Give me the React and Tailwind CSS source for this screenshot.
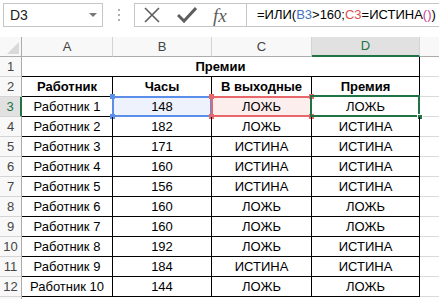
import React from "react";

const F = { fontFamily: '"Liberation Sans", Arial, sans-serif' };

const rows = [
  ["Работник 1", "148", "ЛОЖЬ", "ЛОЖЬ"],
  ["Работник 2", "182", "ЛОЖЬ", "ИСТИНА"],
  ["Работник 3", "171", "ИСТИНА", "ИСТИНА"],
  ["Работник 4", "160", "ИСТИНА", "ИСТИНА"],
  ["Работник 5", "156", "ИСТИНА", "ИСТИНА"],
  ["Работник 6", "160", "ЛОЖЬ", "ЛОЖЬ"],
  ["Работник 7", "160", "ЛОЖЬ", "ЛОЖЬ"],
  ["Работник 8", "192", "ЛОЖЬ", "ИСТИНА"],
  ["Работник 9", "184", "ИСТИНА", "ИСТИНА"],
  ["Работник 10", "144", "ЛОЖЬ", "ЛОЖЬ"],
];

function RowHdr({ n, sel }) {
  return (
    <div
      className={
        "w-[22px] shrink-0 h-full flex items-center justify-center text-[13px] border-b border-b-[#d4d4d4] " +
        (sel
          ? "bg-[#e1e1e1] text-[#217346] border-r-2 border-r-[#217346]"
          : "bg-[#f8f8f8] text-[#444] border-r border-r-[#ababab]")
      }
    >
      {n}
    </div>
  );
}

function Cell({ w, children, bold, extra = "" }) {
  return (
    <div
      className={
        w +
        " shrink-0 h-full flex items-center justify-center border-r border-b border-black text-[13px] text-black relative " +
        (bold ? "font-bold " : "") +
        extra
      }
    >
      {children}
    </div>
  );
}

function Blank() {
  return <div className="flex-1 h-full border-b border-[#dadada]" />;
}

export default function App() {
  return (
    <div className="w-[439px] h-[299px] bg-white overflow-hidden relative" style={F}>
      {/* Top bar */}
      <div className="flex items-start pt-[3px] h-[37px]">
        <div className="ml-[3px] w-[100px] h-[24px] border border-[#c6c6c6] flex items-center justify-between pl-[6px] pr-[5px] text-[14px] text-[#222]">
          <span>D3</span>
          <svg width="8" height="5" viewBox="0 0 8 5">
            <path d="M0 0 H8 L4 4 Z" fill="#777" />
          </svg>
        </div>
        <div className="w-[31px] h-[24px] flex flex-col items-center justify-center gap-[3px]">
          <div className="w-[2px] h-[2px] bg-[#b0b0b0]" />
          <div className="w-[2px] h-[2px] bg-[#b0b0b0]" />
          <div className="w-[2px] h-[2px] bg-[#b0b0b0]" />
        </div>
        <div className="flex-1 h-[24px] border border-[#c6c6c6] border-r-0 flex items-center">
          <div className="w-[112px] h-full flex items-center border-r border-[#c6c6c6] pl-[8px] gap-[16px]">
            <svg width="18" height="16" viewBox="0 0 18 16">
              <path d="M2 1 L16 15 M16 1 L2 15" stroke="#5e5e5e" strokeWidth="1.6" fill="none" />
            </svg>
            <svg width="20" height="16" viewBox="0 0 20 16">
              <path d="M1 8 L7 14 L19 1" stroke="#5e5e5e" strokeWidth="3" fill="none" />
            </svg>
            <span
              className="text-[19px] italic text-[#5e5e5e] leading-none"
              style={{ fontFamily: '"Liberation Serif", "Times New Roman", serif' }}
            >
              fx
            </span>
          </div>
          <div className="pl-[10px] text-[13px] text-black whitespace-nowrap">
            =ИЛИ(<span className="text-[#4472c4]">B3</span>&gt;160;
            <span className="text-[#e0504f]">C3</span>=ИСТИНА
            <span className="text-[#d04090]">()</span>)
          </div>
        </div>
      </div>

      {/* Column headers */}
      <div className="flex h-[20px] text-[13px] text-[#444]">
        <div className="w-[22px] shrink-0 h-full bg-[#f8f8f8] border-r border-b border-[#ababab] relative">
          <svg className="absolute right-[2px] bottom-[2px]" width="12" height="12" viewBox="0 0 12 12">
            <path d="M12 0 V12 H0 Z" fill="#d9d9d9" />
          </svg>
        </div>
        <div className="w-[91px] shrink-0 h-full bg-[#f8f8f8] border-r border-r-[#d4d4d4] border-b border-b-[#ababab] flex items-center justify-center">A</div>
        <div className="w-[99px] shrink-0 h-full bg-[#f8f8f8] border-r border-r-[#d4d4d4] border-b border-b-[#ababab] flex items-center justify-center">B</div>
        <div className="w-[100px] shrink-0 h-full bg-[#f8f8f8] border-r border-r-[#d4d4d4] border-b border-b-[#ababab] flex items-center justify-center">C</div>
        <div className="w-[108px] shrink-0 h-full bg-[#e1e1e1] border-r border-r-[#d4d4d4] border-b-2 border-b-[#217346] text-[#217346] flex items-center justify-center">D</div>
        <div className="flex-1 h-full bg-[#f8f8f8] border-b border-b-[#ababab]" />
      </div>

      {/* Row 1 */}
      <div className="flex h-[20px]">
        <RowHdr n={1} />
        <Cell w="w-[398px]" bold>Премии</Cell>
        <Blank />
      </div>

      {/* Row 2 */}
      <div className="flex h-[20px]">
        <RowHdr n={2} />
        <Cell w="w-[91px]" bold>Работник</Cell>
        <Cell w="w-[99px]" bold>Часы</Cell>
        <Cell w="w-[100px]" bold>В выходные</Cell>
        <Cell w="w-[108px]" bold>Премия</Cell>
        <Blank />
      </div>

      {rows.map((r, i) => {
        const n = i + 3;
        const first = i === 0;
        return (
          <div key={n} className="flex h-[20px]">
            <RowHdr n={n} sel={first} />
            <Cell w="w-[91px]">{r[0]}</Cell>
            <Cell w="w-[99px]" extra={first ? "bg-[#eef2fc]" : ""}>
              {first && (
                <>
                  <div className="absolute left-[-1px] top-[-1px] right-[-1px] bottom-[-1px] border-2 border-[#5b8ee8] pointer-events-none" />
                  <div className="absolute left-[-3px] top-[-3px] w-[5px] h-[5px] bg-[#5b8ee8]" />
                  <div className="absolute right-[-3px] top-[-3px] w-[5px] h-[5px] bg-[#5b8ee8]" />
                  <div className="absolute left-[-3px] bottom-[-3px] w-[5px] h-[5px] bg-[#5b8ee8]" />
                  <div className="absolute right-[-3px] bottom-[-3px] w-[5px] h-[5px] bg-[#5b8ee8]" />
                </>
              )}
              <span className="relative">{r[1]}</span>
            </Cell>
            <Cell w="w-[100px]" extra={first ? "bg-[#fdeeee]" : ""}>
              {first && (
                <>
                  <div className="absolute left-[-1px] top-[-1px] right-[-1px] bottom-[-1px] border-2 border-[#e8676b] pointer-events-none" />
                  <div className="absolute left-[-3px] top-[-3px] w-[5px] h-[5px] bg-[#e8676b]" />
                  <div className="absolute right-[-3px] top-[-3px] w-[5px] h-[5px] bg-[#e8676b]" />
                  <div className="absolute left-[-3px] bottom-[-3px] w-[5px] h-[5px] bg-[#e8676b]" />
                  <div className="absolute right-[-3px] bottom-[-3px] w-[5px] h-[5px] bg-[#e8676b]" />
                </>
              )}
              <span className="relative">{r[2]}</span>
            </Cell>
            <Cell w="w-[108px]">
              {first && (
                <>
                  <div className="absolute left-[-2px] top-[-2px] right-[-1px] bottom-[-1px] border-2 border-[#217346] pointer-events-none" />
                  <div className="absolute right-[-4px] bottom-[-4px] w-[6px] h-[6px] bg-[#217346] border border-white" />
                </>
              )}
              <span className="relative">{r[3]}</span>
            </Cell>
            <Blank />
          </div>
        );
      })}
      <div className="flex h-[20px]">
        <RowHdr n="" />
        <div className="flex-1" />
      </div>
    </div>
  );
}
